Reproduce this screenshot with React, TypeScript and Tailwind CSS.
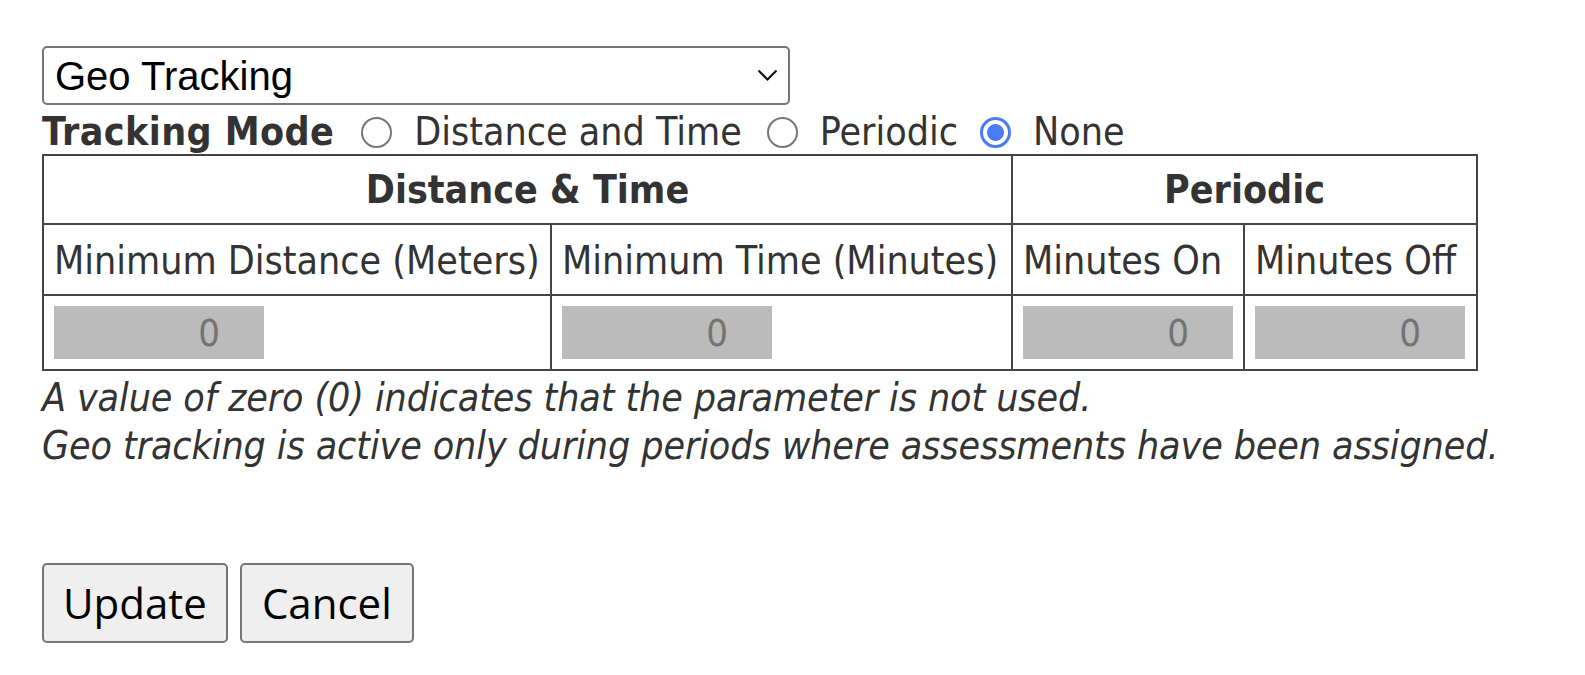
import React, { useState } from 'react';

type Mode = 'distance' | 'periodic' | 'none';

const RadioOption: React.FC<{
  label: string;
  checked: boolean;
  onChange: () => void;
  className?: string;
}> = ({ label, checked, onChange, className = '' }) => (
  <label className={`flex items-center ${className}`}>
    <input
      type="radio"
      name="trackingMode"
      checked={checked}
      onChange={onChange}
      className="appearance-none w-[31px] h-[31px] rounded-full border-[2.5px] border-[#767676] bg-white checked:border-[3px] checked:border-[#4b7bf5] checked:bg-[radial-gradient(circle,#4b7bf5_0,#4b7bf5_8px,white_8.8px)] m-0"
    />
    <span className="ml-[22px]">{label}</span>
  </label>
);

const DisabledField: React.FC = () => (
  <input
    type="text"
    value="0"
    disabled
    readOnly
    className="w-[210px] h-[53px] bg-[#bbbbbb] text-[#747474] text-right pr-[44px] text-[38px] outline-none border-0"
  />
);

export default function App() {
  const [mode, setMode] = useState<Mode>('none');

  return (
    <div className="min-h-screen bg-white pl-[42px] pt-[46px] text-[#333] font-['DejaVu_Sans_Condensed','DejaVu_Sans',sans-serif] font-stretch-condensed text-[39px] leading-[48px]">
      {/* Type selector */}
      <div className="relative w-[748px]">
        <select
          defaultValue="geo"
          className="appearance-none w-full h-[59px] border-2 border-[#767676] rounded-[5px] bg-white pl-[11px] text-black text-[40px] font-['Liberation_Sans',Arial,sans-serif] font-stretch-normal outline-none"
        >
          <option value="geo">Geo Tracking</option>
        </select>
        <svg
          className="absolute right-[12px] top-[23px] pointer-events-none"
          width="21"
          height="13"
          viewBox="0 0 21 13"
          fill="none"
        >
          <path d="M1.5 1.5 L10.5 10.5 L19.5 1.5" stroke="#111" strokeWidth="2.2" />
        </svg>
      </div>

      {/* Tracking mode */}
      <div className="flex items-center h-[44px] mt-[5px]">
        <span className="font-bold tracking-[0.4px]">Tracking Mode</span>
        <RadioOption
          className="ml-[27px]"
          label="Distance and Time"
          checked={mode === 'distance'}
          onChange={() => setMode('distance')}
        />
        <RadioOption
          className="ml-[25px]"
          label="Periodic"
          checked={mode === 'periodic'}
          onChange={() => setMode('periodic')}
        />
        <RadioOption
          className="ml-[22px]"
          label="None"
          checked={mode === 'none'}
          onChange={() => setMode('none')}
        />
      </div>

      {/* Parameters */}
      <table className="table-fixed border-collapse w-[1434px]">
        <colgroup>
          <col className="w-[508px]" />
          <col className="w-[461px]" />
          <col className="w-[232px]" />
          <col className="w-[233px]" />
        </colgroup>
        <tbody>
          <tr>
            <th colSpan={2} className="border-2 border-[#444] h-[69px] font-bold text-center">
              Distance &amp; Time
            </th>
            <th colSpan={2} className="border-2 border-[#444] h-[69px] font-bold text-center">
              Periodic
            </th>
          </tr>
          <tr>
            <td className="border-2 border-[#444] h-[71px] px-[10px] pt-[3px] whitespace-nowrap">Minimum Distance (Meters)</td>
            <td className="border-2 border-[#444] h-[71px] px-[10px] pt-[3px] whitespace-nowrap">Minimum Time (Minutes)</td>
            <td className="border-2 border-[#444] h-[71px] px-[10px] pt-[3px] whitespace-nowrap">Minutes On</td>
            <td className="border-2 border-[#444] h-[71px] px-[10px] pt-[3px] whitespace-nowrap">Minutes Off</td>
          </tr>
          <tr>
            <td className="border-2 border-[#444] h-[75px] px-[10px]"><DisabledField /></td>
            <td className="border-2 border-[#444] h-[75px] px-[10px]"><DisabledField /></td>
            <td className="border-2 border-[#444] h-[75px] px-[10px]"><DisabledField /></td>
            <td className="border-2 border-[#444] h-[75px] px-[10px]"><DisabledField /></td>
          </tr>
        </tbody>
      </table>

      <div className="italic mt-[3px] tracking-[-0.1px]">
        <div>A value of zero (0) indicates that the parameter is not used.</div>
        <div>Geo tracking is active only during periods where assessments have been assigned.</div>
      </div>

      {/* Actions */}
      <div className="flex gap-[12px] mt-[93px] font-['Open_Sans',sans-serif] font-stretch-normal text-[42px] text-black">
        <button className="h-[80px] px-[19px] border-2 border-[#767676] rounded-[5px] bg-[#efefef]">Update</button>
        <button className="h-[80px] px-[20px] border-2 border-[#767676] rounded-[5px] bg-[#efefef]">Cancel</button>
      </div>
    </div>
  );
}
